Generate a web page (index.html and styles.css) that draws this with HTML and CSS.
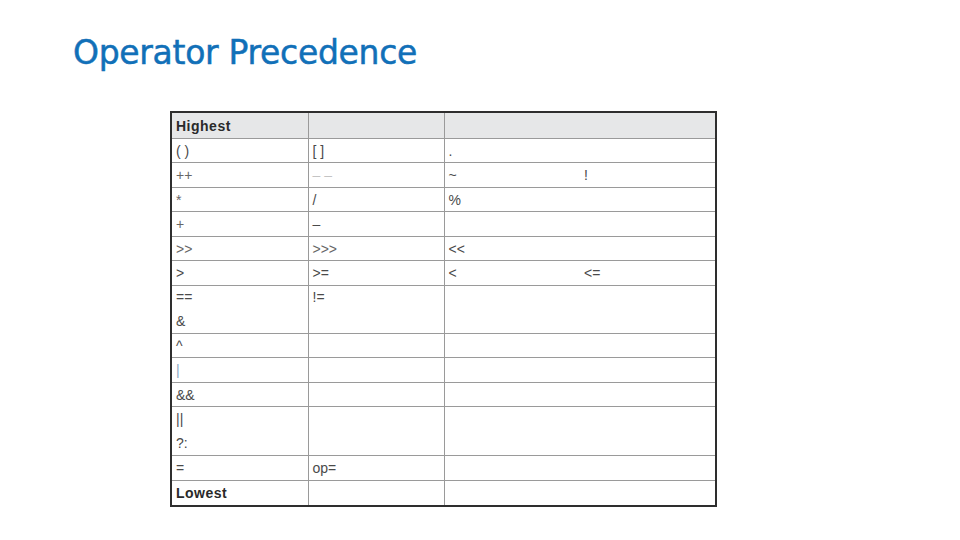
FILE: index.html
```html
<!DOCTYPE html>
<html>
<head>
<meta charset="utf-8">
<link rel="stylesheet" href="styles.css">
</head>
<body>
<div class="slide">
  <h1 class="title">Operator Precedence</h1>
  <table class="prec">
    <colgroup>
      <col class="c1"><col class="c2"><col class="c3"><col class="c4">
    </colgroup>
    <tr class="head"><td class="b">Highest</td><td></td><td class="l"></td><td class="r"></td></tr>
    <tr class="h24"><td>( )</td><td>[ ]</td><td class="l">.</td><td class="r"></td></tr>
    <tr class="h25"><td class="lt">++</td><td class="vlt">– –</td><td class="l">~</td><td class="r">!</td></tr>
    <tr class="h24"><td class="lt">*</td><td>/</td><td class="l">%</td><td class="r"></td></tr>
    <tr class="h25"><td class="lt">+</td><td>–</td><td class="l"></td><td class="r"></td></tr>
    <tr class="h24"><td class="lt">&gt;&gt;</td><td class="lt">&gt;&gt;&gt;</td><td class="l">&lt;&lt;</td><td class="r"></td></tr>
    <tr class="h25"><td>&gt;</td><td>&gt;=</td><td class="l">&lt;</td><td class="r">&lt;=</td></tr>
    <tr class="dbl d48"><td>==<br>&amp;</td><td>!=<br>&nbsp;</td><td class="l"></td><td class="r"></td></tr>
    <tr class="h24"><td>^</td><td></td><td class="l"></td><td class="r"></td></tr>
    <tr class="h25"><td class="blue">|</td><td></td><td class="l"></td><td class="r"></td></tr>
    <tr class="h24"><td>&amp;&amp;</td><td></td><td class="l"></td><td class="r"></td></tr>
    <tr class="dbl d49"><td>||<br>?:</td><td></td><td class="l"></td><td class="r"></td></tr>
    <tr class="h25"><td>=</td><td>op=</td><td class="l"></td><td class="r"></td></tr>
    <tr class="h25 foot"><td class="b">Lowest</td><td></td><td class="l"></td><td class="r"></td></tr>
  </table>
</div>
</body>
</html>
```

FILE: styles.css
```css
html, body {
  margin: 0;
  padding: 0;
  background: #ffffff;
}

.slide {
  width: 960px;
  height: 540px;
  padding-top: 33px;
  box-sizing: border-box;
}

.title {
  margin: 0 0 0 73px;
  font-family: "DejaVu Sans", "Open Sans", sans-serif;
  font-weight: 400;
  font-size: 33px;
  line-height: 40px;
  color: #1170b8;
  letter-spacing: -0.3px;
  -webkit-text-stroke: 0.5px #1170b8;
}

.prec {
  margin: 38px 0 0 170px;
  border-collapse: collapse;
  table-layout: fixed;
  width: 545px;
  border: 2px solid #2e2e2e;
  font-family: "Liberation Sans", Arial, sans-serif;
  font-size: 14px;
  color: #4a4a4a;
}

.c1 { width: 137px; }
.c2 { width: 136px; }
.c3 { width: 139px; }
.c4 { width: 133px; }

.prec td {
  border: 1px solid #9a9a9a;
  padding: 0 0 0 4px;
  line-height: 18px;
  vertical-align: middle;
  white-space: nowrap;
}

.prec td.l { border-right: none; }
.prec td.r { border-left: none; padding-left: 1px; }

.prec tr.head td {
  background: #e6e7e8;
  height: 25px;
}

.prec tr.h24 td { height: 23px; }
.prec tr.h25 td { height: 24px; }

.prec tr.dbl td {
  vertical-align: top;
  line-height: 24px;
  padding-top: 0;
  padding-bottom: 0;
}
.prec tr.d48 td { height: 47px; line-height: 23.5px; }
.prec tr.d49 td { height: 48px; }

.prec td.b {
  font-weight: 700;
  color: #2a2a2a;
  letter-spacing: 0.5px;
}

.prec td.lt { color: #666666; }
.prec td.vlt { color: #c4c4c4; }
.prec td.blue { color: #8aa6c4; }
```
